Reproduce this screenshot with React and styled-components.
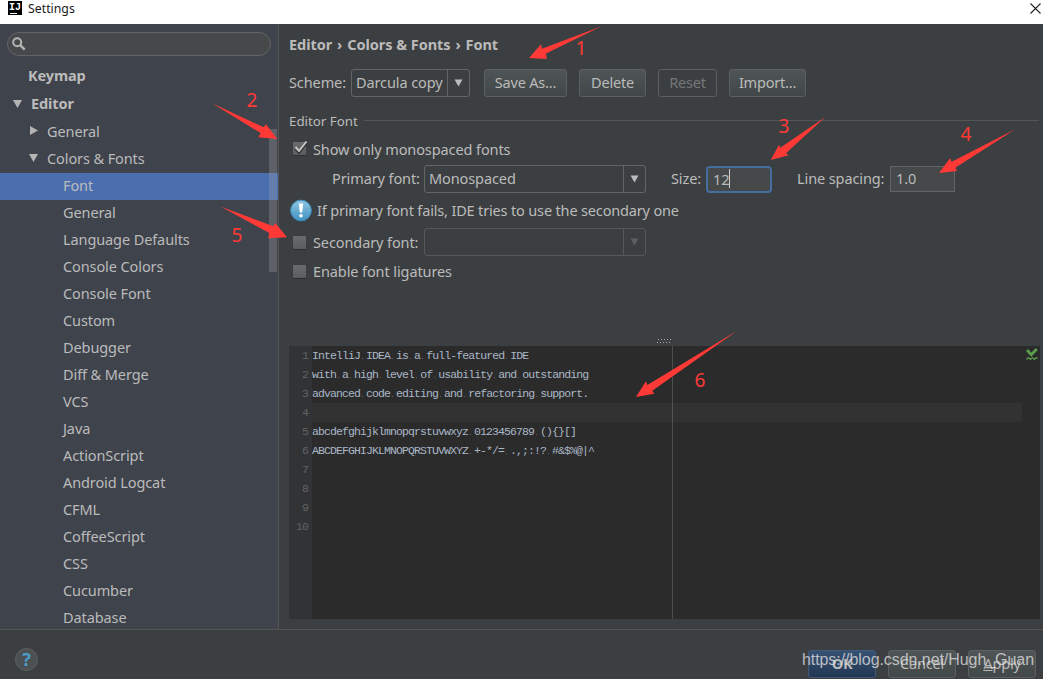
import React, { useState } from 'react'
import styled, { createGlobalStyle, css } from 'styled-components'

const GlobalStyle = createGlobalStyle`
  * {
    box-sizing: border-box;
  }
  body {
    margin: 0;
    background: #3c3f41;
    overflow: hidden;
  }
`

const Window = styled.div`
  position: relative;
  display: flex;
  flex-direction: column;
  width: 1043px;
  height: 679px;
  overflow: hidden;
  background: #3c3f41;
  color: #bbbbbb;
  font-family: 'Noto Sans', 'Open Sans', sans-serif;
  font-size: 14.5px;
  letter-spacing: -0.1px;
  line-height: 20px;
  white-space: nowrap;
`

const TitleBar = styled.header`
  display: flex;
  align-items: center;
  flex: none;
  height: 24px;
  padding: 0 2px 7px 8px;
  background: #fff;
  color: #1a1a1a;
  font-size: 12.3px;
  letter-spacing: 0;
`

const Title = styled.span`
  flex: 1;
  margin-left: 6px;
`

const Logo = styled.div`
  width: 14px;
  height: 14px;
  margin-top: -1px;
  padding-left: 1px;
  background: linear-gradient(#fff, #fff) 2px 12px / 7px 1px no-repeat #000;
  color: #fff;
  font: bold 10px/13px 'Liberation Mono', monospace;
`

const Body = styled.div`
  display: flex;
  flex: none;
  height: 606px;
  border-bottom: 1px solid #555555;
`

const Sidebar = styled.aside`
  position: relative;
  flex: none;
  width: 279px;
  padding-top: 8px;
  overflow: hidden;
  background: #3f434c;
  border-right: 1px solid #555555;
`

const SearchBox = styled.div`
  display: flex;
  align-items: center;
  width: 264px;
  height: 24px;
  margin: 0 0 7px 7px;
  padding-left: 4px;
  border: 1px solid #646464;
  border-radius: 12px;
  background: #45494a;
`

const TreeRow = styled.div`
  display: flex;
  align-items: center;
  height: ${({ $top }) => ($top ? 28 : 27)}px;
  padding-left: ${({ $indent }) => $indent}px;
  padding-bottom: 4px;
  font-weight: ${({ $top }) => ($top ? 'bold' : 'normal')};
  background: ${({ $selected }) => ($selected ? '#4b6eaf' : 'transparent')};
`

const Toggle = styled.svg`
  width: 9px;
  height: 9px;
  margin-right: ${({ $gap }) => $gap}px;
  fill: #b4b4b4;
`

const Scrollbar = styled.div`
  position: absolute;
  top: 105px;
  right: 1px;
  width: 8px;
  height: 143px;
  background: rgba(166, 166, 166, 0.3);
`

const Content = styled.main`
  display: flex;
  flex-direction: column;
  flex: 1;
  padding: 10px 3px 0 10px;
`

const Crumbs = styled.h1`
  margin: 0 0 15px;
  font-size: 14.5px;
  line-height: 20px;
  letter-spacing: -0.05px;
  font-weight: bold;
`

const Separator = styled.span`
  margin: 0 1.2px;
`

const Row = styled.div`
  display: flex;
  align-items: center;
  height: ${({ $height }) => $height}px;
`

const Label = styled.span`
  flex: none;
  width: ${({ $width }) => ($width ? `${$width}px` : 'auto')};
  padding-left: ${({ $indent }) => $indent || 0}px;
  padding-bottom: ${({ $drop }) => ($drop ? 0 : 2)}px;
`

const Hint = styled(Label)`
  letter-spacing: -0.16px;
`

const Combo = styled.div`
  display: flex;
  width: ${({ $width }) => $width}px;
  height: 28px;
  border: 1px solid ${({ $disabled }) => ($disabled ? '#565859' : '#646464')};
  border-radius: 3px;
  line-height: 25px;
`

const ComboValue = styled.span`
  flex: 1;
  padding-left: 4px;
`

const ComboArrow = styled.span`
  display: flex;
  align-items: center;
  justify-content: center;
  width: 22px;
  border-left: 1px solid ${({ $disabled }) => ($disabled ? '#565859' : '#646464')};

  svg {
    margin-right: 1px;
    fill: ${({ $disabled }) => ($disabled ? '#5d5f60' : '#bbbbbb')};
  }
`

const Button = styled.button`
  width: ${({ $width }) => $width}px;
  height: 28px;
  margin: 0 0 0 ${({ $gap = 12 }) => $gap}px;
  padding: 0 0 2px;
  border: 1px solid #5c6061;
  border-radius: 3px;
  background: linear-gradient(#4f5456, #424748);
  color: #bbbbbb;
  font: inherit;
  letter-spacing: -0.2px;

  ${({ $disabled }) => $disabled && css`
    background: none;
    color: #777777;
  `}

  ${({ $primary }) => $primary && css`
    border-color: #42597a;
    background: linear-gradient(#365173, #233753);
    font-weight: bold;
  `}
`

const GroupTitle = styled.div`
  display: flex;
  align-items: center;
  height: 20px;
  margin: 14px 1px 5px 0;
  font-size: 13.3px;
  letter-spacing: 0;

  &:after {
    content: '';
    flex: 1;
    height: 1px;
    margin: -1px 0 0 6px;
    background: #555555;
  }
`

const CheckBox = styled.span`
  flex: none;
  width: 13px;
  height: 13px;
  margin: 0 7px 0 4px;
  border-radius: 1px;
  background: linear-gradient(#6a6b6c, #5c5d5e);
  box-shadow: 0 1px 0 #2b2d2e, 0 0 1px #2f3132;

  svg {
    display: block;
    margin-top: -2px;
  }
`

const Field = styled.input`
  width: 65px;
  height: 26px;
  padding: 0 0 2px 5px;
  border: 1px solid #646464;
  background: #45494a;
  color: #bbbbbb;
  font: inherit;
  letter-spacing: inherit;
  outline: none;
`

const FocusedField = styled.div`
  display: flex;
  align-items: center;
  width: 66px;
  height: 27px;
  padding: 0 0 1px 5px;
  border: 2px solid #466d9f;
  border-radius: 4px;
  background: #45494a;
`

const Caret = styled.i`
  width: 1px;
  height: 19px;
  background: #d0d0d0;
`

const Splitter = styled.div`
  display: flex;
  justify-content: center;
  margin-top: 56px;
  height: 7px;
`

const Editor = styled.div`
  position: relative;
  display: flex;
  height: 273px;
  background: #2b2b2b;
  color: #a9b7c6;
  font: 11.5px/19px 'Liberation Mono', monospace;
  letter-spacing: -0.9px;
`

const Gutter = styled.div`
  width: 23px;
  background: #313335;
  color: #606366;
  text-align: right;

  div {
    height: 19px;
    padding-right: 4px;
  }
`

const Lines = styled.div`
  flex: 1;
  margin-right: 18px;
  background: linear-gradient(#4d4d4d, #4d4d4d) 360px 0 / 1px 100% no-repeat;
`

const CodeLine = styled.div`
  height: 19px;
  white-space: pre;
  background: ${({ $current }) => ($current ? 'rgba(255, 255, 255, 0.035)' : 'none')};
`

// whitespace marker, a faint dot in the middle of every space
const Space = styled.span`
  background: linear-gradient(#5a6066, #5a6066) 2px 9px / 1px 1px no-repeat;
`

const Inspection = styled.svg`
  position: absolute;
  top: 2px;
  right: 2px;
`

const Footer = styled.footer`
  display: flex;
  align-items: flex-start;
  flex: 1;
  padding: 20px 7px 0 15px;
`

const Help = styled.div`
  width: 23px;
  height: 23px;
  margin: -2px auto 0 0;
  border: 1px solid #5e6264;
  border-radius: 50%;
  background: #4b5052;
  color: #4a9cc9;
  font: bold 18px/20px 'Noto Sans', sans-serif;
  text-align: center;
`

const Watermark = styled.div`
  position: absolute;
  right: 9px;
  top: 650px;
  color: rgba(225, 225, 225, 0.78);
  font: 16px/20px 'Liberation Sans', sans-serif;
  letter-spacing: -0.06px;
`

const Marks = styled.svg`
  position: absolute;
  inset: 0;
  fill: #ff3a36;
  pointer-events: none;
`

const Mark = styled.span`
  position: absolute;
  left: ${({ $x }) => $x - 10}px;
  top: ${({ $y }) => $y - 13}px;
  width: 20px;
  color: #ff3a36;
  font: 19px/24px 'Noto Sans', sans-serif;
  text-align: center;
`

const tree = [
  { name: 'Keymap', indent: 28, top: true },
  { name: 'Editor', indent: 13, top: true, toggle: 'open', gap: 9 },
  { name: 'General', indent: 29, toggle: 'closed', gap: 9 },
  { name: 'Colors & Fonts', indent: 29, toggle: 'open', gap: 9 },
  { name: 'Font', indent: 63 },
  ...[
    'General', 'Language Defaults', 'Console Colors', 'Console Font', 'Custom',
    'Debugger', 'Diff & Merge', 'VCS', 'Java', 'ActionScript', 'Android Logcat',
    'CFML', 'CoffeeScript', 'CSS', 'Cucumber', 'Database',
  ].map((name) => ({ name, indent: 63 })),
]

const code = [
  'IntelliJ IDEA is a full-featured IDE',
  'with a high level of usability and outstanding',
  'advanced code editing and refactoring support.',
  '',
  'abcdefghijklmnopqrstuvwxyz 0123456789 (){}[]',
  'ABCDEFGHIJKLMNOPQRSTUVWXYZ +-*/= .,;:!? #&$%@|^',
  '', '', '', '',
]

const arrows = [
  '601.7,26.3 542,48.7 541,44.3 529,58 546.7,59 546,53.5',
  '212,103.3 263.7,127.3 266,124.3 277.3,139 258.3,137.3 260.7,133',
  '825.3,117 780.3,147.7 779,144.7 770.7,160 788.7,155.3 786,153.3',
  '1015.3,129.3 951.7,161.7 950,158.3 939,173 957,171 955.3,167.7',
  '220.5,206.6 273.3,226.3 275.3,223 287,237.3 268.3,238.3 269.3,233',
  '737.5,330.5 647.3,385 646,381.3 636,397 654.3,393.7 652.3,390.7',
]

const marks = [[581, 49], [252, 101], [784, 127], [966, 135], [237, 236], [700, 381]]

const Triangle = () => (
  <svg width="9" height="8" viewBox="0 0 9 8"><path d="M0.5 0.5h8L4.5 7.5z" /></svg>
)

const Check = ({ checked }) => (
  <CheckBox>
    {checked && (
      <svg width="15" height="15" viewBox="0 0 15 15" fill="none">
        <path d="M2.5 8.5l3.5 4L13.5 3" stroke="#2c2d2e" strokeWidth="2.4" />
        <path d="M2.5 7l3.5 4L13.5 1.5" stroke="#c8c8c8" strokeWidth="2" />
      </svg>
    )}
  </CheckBox>
)

const App = () => {
  const [spacing, setSpacing] = useState('1.0')

  return (
    <>
      <GlobalStyle />
      <Window>
        <TitleBar>
          <Logo>IJ</Logo>
          <Title>Settings</Title>
          <svg width="11" height="11" viewBox="0 0 11 11" stroke="#222" strokeWidth="1.1">
            <path d="M0.5 0.5l10 10M10.5 0.5l-10 10" />
          </svg>
        </TitleBar>

        <Body>
          <Sidebar>
            <SearchBox>
              <svg width="14" height="14" viewBox="0 0 14 14" fill="none" stroke="#b5b5b5">
                <circle cx="5.2" cy="5.2" r="4" strokeWidth="2" />
                <path d="M8.2 8.2l4.5 4.5" strokeWidth="2.4" />
              </svg>
            </SearchBox>
            {tree.map((item, i) => (
              <TreeRow key={i} $indent={item.indent} $top={item.top} $selected={item.name === 'Font'}>
                {item.toggle && (
                  <Toggle viewBox="0 0 9 9" $gap={item.gap}>
                    <path d={item.toggle === 'open' ? 'M0 1h9L4.5 9z' : 'M1 0v9l8-4.5z'} />
                  </Toggle>
                )}
                {item.name}
              </TreeRow>
            ))}
            <Scrollbar />
          </Sidebar>

          <Content>
            <Crumbs>
              Editor <Separator>›</Separator> Colors &amp; Fonts <Separator>›</Separator> Font
            </Crumbs>
            <Row $height={28}>
              <Label $width={62}>Scheme:</Label>
              <Combo $width={119}>
                <ComboValue>Darcula copy</ComboValue>
                <ComboArrow><Triangle /></ComboArrow>
              </Combo>
              <Button $width={83} $gap={14}>Save As...</Button>
              <Button $width={67}>Delete</Button>
              <Button $width={59} $disabled>Reset</Button>
              <Button $width={77}>Import...</Button>
            </Row>

            <GroupTitle>Editor Font</GroupTitle>
            <Row $height={25}>
              <Check checked />
              <Label $drop>Show only monospaced fonts</Label>
            </Row>
            <Row $height={36}>
              <Label $width={135} $indent={43}>Primary font:</Label>
              <Combo $width={222}>
                <ComboValue>Monospaced</ComboValue>
                <ComboArrow><Triangle /></ComboArrow>
              </Combo>
              <Label $width={60} $indent={25}>Size:</Label>
              <FocusedField>12<Caret /></FocusedField>
              <Label $width={118} $indent={25}>Line spacing:</Label>
              <Field value={spacing} onChange={(e) => setSpacing(e.target.value)} />
            </Row>
            <Row $height={27}>
              <svg width="24" height="24" viewBox="0 0 24 24">
                <defs>
                  <linearGradient id="info" x1="0" y1="0" x2="0" y2="1">
                    <stop offset="0" stopColor="#8fc6e2" />
                    <stop offset="1" stopColor="#3f93c2" />
                  </linearGradient>
                </defs>
                <circle cx="12" cy="11.5" r="10.4" fill="url(#info)" stroke="#3a89b8" />
                <path d="M9.8 4.5h4.4l-1 9h-2.4z" fill="#fff" />
                <circle cx="12" cy="16.7" r="1.8" fill="#fff" />
              </svg>
              <Hint $indent={4}>If primary font fails, IDE tries to use the secondary one</Hint>
            </Row>
            <Row $height={36}>
              <Check />
              <Label $width={111} $drop>Secondary font:</Label>
              <Combo $width={222} $disabled>
                <ComboValue />
                <ComboArrow $disabled><Triangle /></ComboArrow>
              </Combo>
            </Row>
            <Row $height={23}>
              <Check />
              <Label>Enable font ligatures</Label>
            </Row>

            <Splitter>
              <svg width="15" height="5" viewBox="0 0 15 5" fill="#a5a7a8">
                {[0, 3, 6, 9, 12].map((x) => (
                  <path key={x} d={`M${x + 1} 0h1v1h-1zM${x} 3h1v1h-1z`} />
                ))}
              </svg>
            </Splitter>
            <Editor>
              <Gutter>
                {code.map((_, i) => <div key={i}>{i + 1}</div>)}
              </Gutter>
              <Lines>
                {code.map((line, i) => (
                  <CodeLine key={i} $current={i === 3}>
                    {line.split(' ').map((word, j) => (
                      <React.Fragment key={j}>
                        {j > 0 && <Space> </Space>}
                        {word}
                      </React.Fragment>
                    ))}
                  </CodeLine>
                ))}
              </Lines>
              <Inspection width="12" height="13" viewBox="0 0 12 13" fill="none" stroke="#5a9e4b">
                <path d="M1 2l4.3 4.8L10.8 1" strokeWidth="2.8" />
                <path d="M0.5 11.5l2-2 2 2 2-2 2 2 2-2 1 1" strokeWidth="1.2" />
              </Inspection>
            </Editor>
          </Content>
        </Body>

        <Footer>
          <Help>?</Help>
          <Button $width={68} $primary>OK</Button>
          <Button $width={68}>Cancel</Button>
          <Button $width={68}><u>A</u>pply</Button>
        </Footer>

        <Watermark>https://blog.csdn.net/Hugh_Guan</Watermark>
        <Marks width="1043" height="679" viewBox="0 0 1043 679">
          {arrows.map((points) => <polygon key={points} points={points} />)}
        </Marks>
        {marks.map(([x, y], i) => <Mark key={i} $x={x} $y={y}>{i + 1}</Mark>)}
      </Window>
    </>
  )
}

export default App
